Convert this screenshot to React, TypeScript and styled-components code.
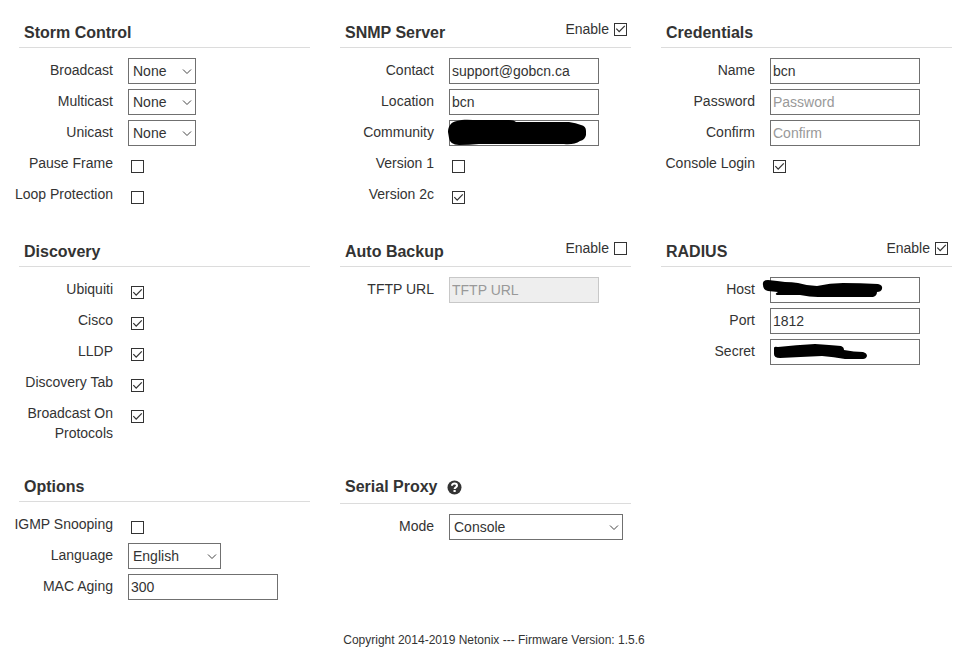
import React, { useId, useState } from "react";
import styled, { createGlobalStyle, css } from "styled-components";

const GlobalStyle = createGlobalStyle`
  *, *::before, *::after { box-sizing: border-box; }
  body {
    margin: 0;
    background: #fff;
    color: #333;
    font: 14px/20px "Liberation Sans", Arial, sans-serif;
  }
`;

const Page = styled.div`
  padding: 22px 14px 0 9px;
`;

const Sections = styled.main`
  display: grid;
  grid-template-columns: repeat(3, minmax(0, 1fr));
  column-gap: 20px;
  row-gap: 33px;
`;

const SectionHeader = styled.header<{ $tall: boolean }>`
  display: flex;
  justify-content: space-between;
  align-items: flex-start;
  margin: 0 0 10px 10px;
  padding: 0 4px ${(p) => (p.$tall ? 5 : 3)}px 5px;
  border-bottom: 1px solid #dcdcdc;
`;

const Heading = styled.h2`
  display: flex;
  align-items: center;
  gap: 9px;
  margin: 0;
  font-size: 16px;
  font-weight: bold;
  line-height: 22px;
`;

const EnableLabel = styled.label`
  display: flex;
  align-items: center;
  gap: 5px;
  line-height: 14px;
`;

const Rows = styled.div`
  display: grid;
  gap: 5px;
`;

const Row = styled.div`
  display: grid;
  grid-template-columns: 104px minmax(0, 1fr);
  column-gap: 15px;
  align-items: start;
  min-height: 26px;
`;

const RowLabel = styled.label`
  padding-top: 2px;
  text-align: right;
`;

const controlBox = css`
  height: 26px;
  border: 1px solid #707070;
  border-radius: 0;
  background: #fff;
  color: #333;
  font: inherit;
`;

const TextInput = styled.input`
  ${controlBox}
  display: block;
  width: 150px;
  padding: 0 2px;
  &::placeholder { color: #999; opacity: 1; }
  &:disabled { background: #eee; border-color: #c8c8c8; }
`;

const FieldWrap = styled.div`
  position: relative;
  width: fit-content;
`;

const SelectBox = styled.select<{ $width: number }>`
  ${controlBox}
  display: block;
  appearance: none;
  width: ${(p) => p.$width}px;
  padding: 0 18px 0 4px;
`;

const Chevron = styled.svg`
  position: absolute;
  right: 4px;
  top: 10px;
  pointer-events: none;
`;

const CheckWrap = styled.div`
  padding: 9px 0 0 3px;
`;

const CheckInput = styled.input`
  appearance: none;
  display: grid;
  place-items: center;
  width: 13px;
  height: 13px;
  margin: 0;
  border: 1px solid #333;
  background: #fff;
  &:checked::before {
    content: "";
    width: 11px;
    height: 11px;
    background: #333;
    clip-path: polygon(8% 50%, 16% 43%, 38% 66%, 85% 18%, 93% 26%, 38% 82%);
  }
`;

const Scribble = styled.svg`
  position: absolute;
  left: -10px;
  top: -2px;
  pointer-events: none;
`;

const Footer = styled.footer`
  padding: 31px 0 0 27px;
  text-align: center;
  font-size: 12px;
  line-height: 18px;
`;

function Check({ checked, id }: { checked?: boolean; id?: string }) {
  const [on, setOn] = useState(!!checked);
  return <CheckInput id={id} type="checkbox" checked={on} onChange={() => setOn(!on)} />;
}

function CheckRow({ label, checked }: { label: string; checked?: boolean }) {
  const id = useId();
  return (
    <Row>
      <RowLabel htmlFor={id}>{label}</RowLabel>
      <CheckWrap><Check id={id} checked={checked} /></CheckWrap>
    </Row>
  );
}

interface TextRowProps {
  label: string;
  value?: string;
  placeholder?: string;
  type?: string;
  disabled?: boolean;
  redaction?: string;
}

function TextRow({ label, value = "", placeholder, type = "text", disabled, redaction }: TextRowProps) {
  const id = useId();
  return (
    <Row>
      <RowLabel htmlFor={id}>{label}</RowLabel>
      <FieldWrap>
        <TextInput id={id} type={type} defaultValue={value} placeholder={placeholder} disabled={disabled} />
        {redaction && (
          <Scribble width="160" height="30" viewBox="0 0 160 30" aria-hidden="true">
            <path d={redaction} fill="#000" />
          </Scribble>
        )}
      </FieldWrap>
    </Row>
  );
}

function SelectRow({ label, value, width }: { label: string; value: string; width: number }) {
  const id = useId();
  return (
    <Row>
      <RowLabel htmlFor={id}>{label}</RowLabel>
      <FieldWrap>
        <SelectBox id={id} $width={width} defaultValue={value}>
          <option>{value}</option>
        </SelectBox>
        <Chevron width="10" height="7" viewBox="0 0 10 7" aria-hidden="true">
          <path d="M1 1.5 5 5.5 9 1.5" fill="none" stroke="#444" />
        </Chevron>
      </FieldWrap>
    </Row>
  );
}

interface SectionProps {
  title: string;
  enable?: boolean;
  icon?: React.ReactNode;
  children: React.ReactNode;
}

function Section({ title, enable, icon, children }: SectionProps) {
  return (
    <section>
      <SectionHeader $tall={!!icon}>
        <Heading>{title}{icon}</Heading>
        {enable !== undefined && (
          <EnableLabel>Enable<Check checked={enable} /></EnableLabel>
        )}
      </SectionHeader>
      <Rows>{children}</Rows>
    </section>
  );
}

const HelpIcon = () => (
  <svg width="15" height="15" viewBox="0 0 15 15" aria-hidden="true">
    <circle cx="7.5" cy="7.5" r="7" fill="#333" />
    <path d="M5 5.7C5 2.6 10 2.7 10 5.7 10 7.4 7.6 7.2 7.6 8.9" fill="none" stroke="#fff" strokeWidth="2" />
    <rect x="6.5" y="10" width="2.2" height="2" fill="#fff" />
  </svg>
);

const COMMUNITY = "M9 14C9 8 12 4 18 3 24 1 32 2 40 2H70Q75 2 77 4H130Q137 5 142 7 147 8 147 13V17Q146 22 141 23 135 27 125 26H40Q30 27 20 27 11 27 10 20Z";
const HOST = "M3 10Q2 5 8 5 18 6 25 7 32 7 38 8 48 11 57 11 70 8 83 8 100 8 118 9 123 10 122 14 121 17 117 17 117 21 113 22H58Q50 22 40 20 25 20 17 20 14 19 18 17L8 16Q3 15 3 10Z";
const SECRET = "M14 11Q14 9 18 10 36 8 55 7 70 8 81 9 84 10 84 13 94 15 103 15 107 16 107 19 106 22 103 22 92 22 85 22 74 20 62 19 40 20 20 21 14 21 14 17Z";

export default function App() {
  return (
    <>
      <GlobalStyle />
      <Page>
        <Sections>
          <Section title="Storm Control">
            <SelectRow label="Broadcast" value="None" width={68} />
            <SelectRow label="Multicast" value="None" width={68} />
            <SelectRow label="Unicast" value="None" width={68} />
            <CheckRow label="Pause Frame" />
            <CheckRow label="Loop Protection" />
          </Section>
          <Section title="SNMP Server" enable={true}>
            <TextRow label="Contact" value="support@gobcn.ca" />
            <TextRow label="Location" value="bcn" />
            <TextRow label="Community" redaction={COMMUNITY} />
            <CheckRow label="Version 1" />
            <CheckRow label="Version 2c" checked />
          </Section>
          <Section title="Credentials">
            <TextRow label="Name" value="bcn" />
            <TextRow label="Password" type="password" placeholder="Password" />
            <TextRow label="Confirm" type="password" placeholder="Confirm" />
            <CheckRow label="Console Login" checked />
          </Section>
          <Section title="Discovery">
            <CheckRow label="Ubiquiti" checked />
            <CheckRow label="Cisco" checked />
            <CheckRow label="LLDP" checked />
            <CheckRow label="Discovery Tab" checked />
            <CheckRow label="Broadcast On Protocols" checked />
          </Section>
          <Section title="Auto Backup" enable={false}>
            <TextRow label="TFTP URL" placeholder="TFTP URL" disabled />
          </Section>
          <Section title="RADIUS" enable={true}>
            <TextRow label="Host" redaction={HOST} />
            <TextRow label="Port" value="1812" />
            <TextRow label="Secret" redaction={SECRET} />
          </Section>
          <Section title="Options">
            <CheckRow label="IGMP Snooping" />
            <SelectRow label="Language" value="English" width={93} />
            <TextRow label="MAC Aging" value="300" />
          </Section>
          <Section title="Serial Proxy" icon={<HelpIcon />}>
            <SelectRow label="Mode" value="Console" width={174} />
          </Section>
        </Sections>
        <Footer>Copyright 2014-2019 Netonix --- Firmware Version: 1.5.6</Footer>
      </Page>
    </>
  );
}
